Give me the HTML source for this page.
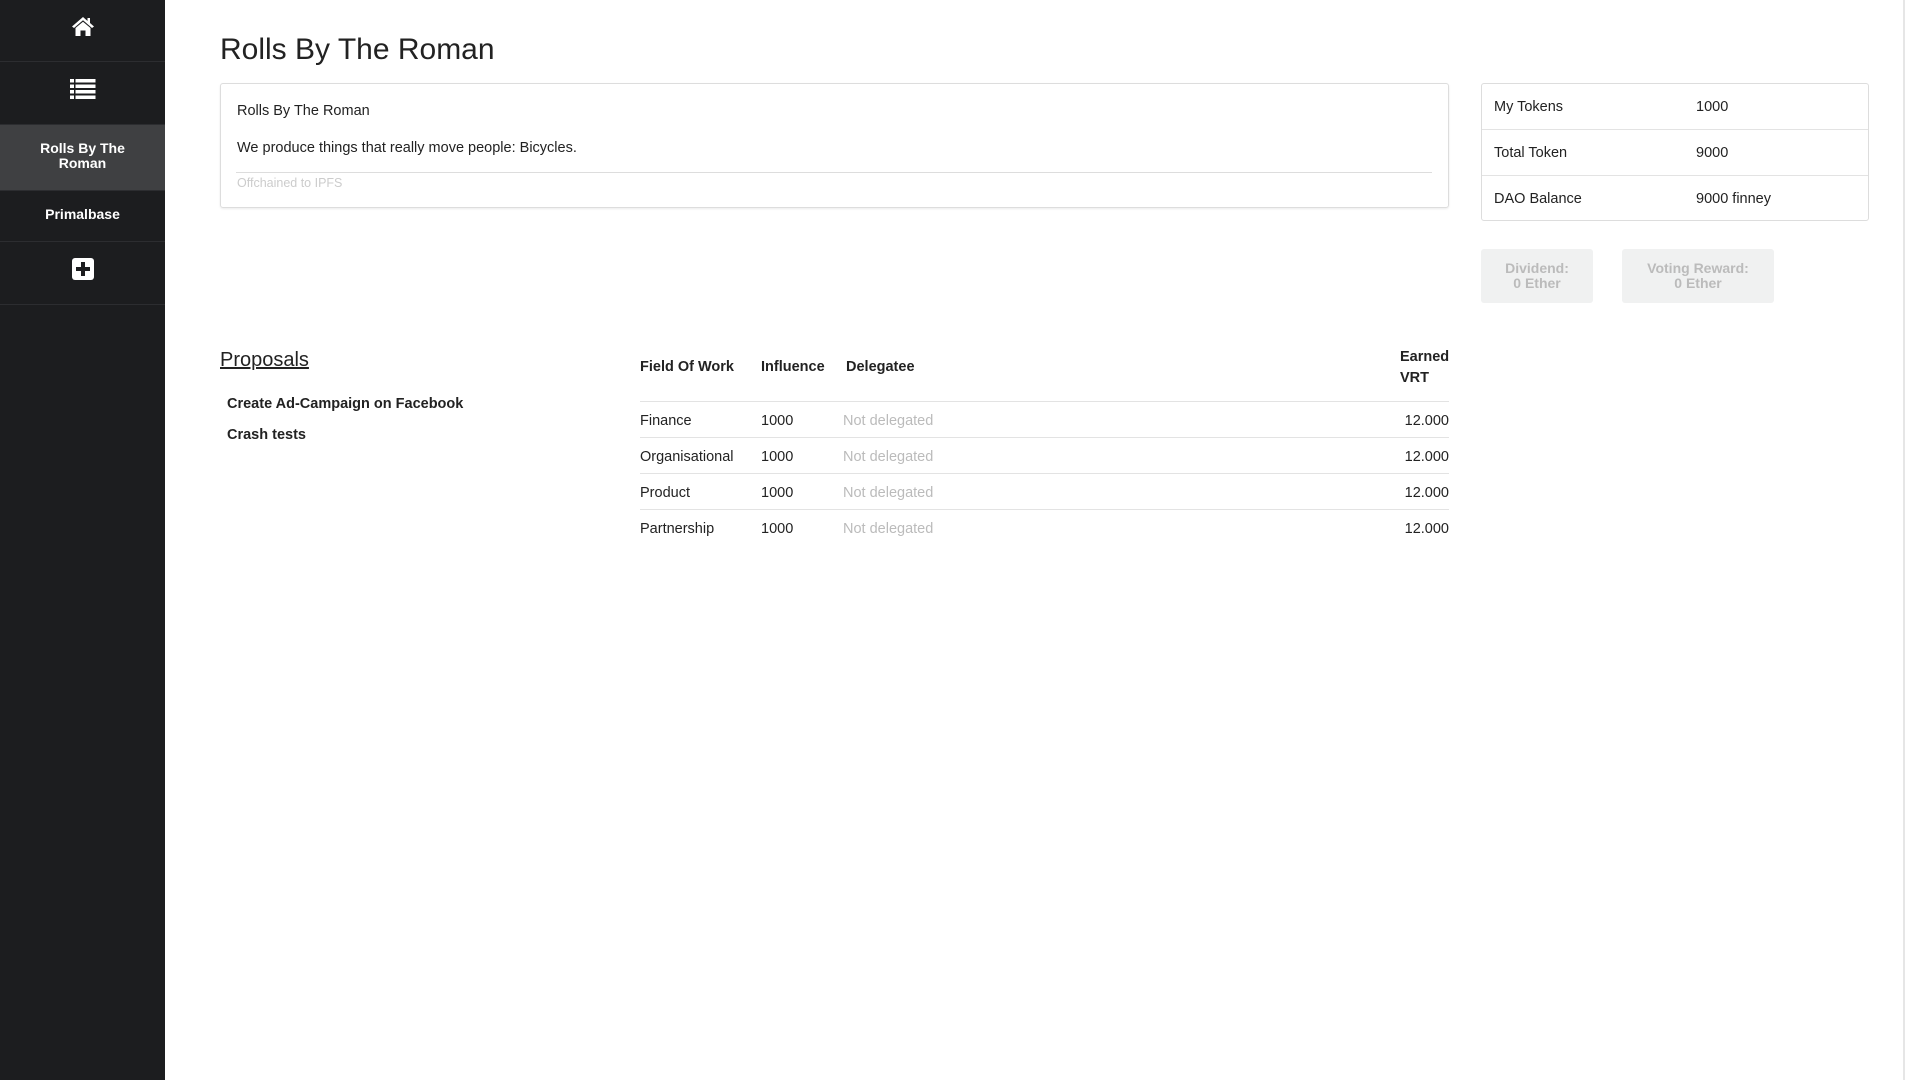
<!DOCTYPE html>
<html><head><meta charset="utf-8"><style>
*{margin:0;padding:0;box-sizing:border-box}
body{width:1906px;height:1080px;background:#fff;font-family:"Liberation Sans",sans-serif;color:#222;position:relative;overflow:hidden}
.sb{position:absolute;left:0;top:0;width:165px;height:1080px;background:#1c1d1f}
.it{position:absolute;left:0;width:165px;border-bottom:1px solid #2c2d30;display:flex;align-items:center;justify-content:center;color:#fff;font-weight:bold;font-size:14px;text-align:center;line-height:15px}
.a{position:absolute}
.card{position:absolute;left:220px;top:83px;width:1229px;height:125px;border:1px solid #ddd;border-radius:3px;box-shadow:0 1px 2px rgba(0,0,0,.08)}
.kv{position:absolute;left:1481px;top:83px;width:388px;height:138px;border:1px solid #ddd;border-radius:3px}
.kv div{height:46px;border-bottom:1px solid #e3e3e3;position:relative;font-size:14.5px;line-height:46px}
.kv div:last-child{border-bottom:none}
.kv span{position:absolute;left:12px}.kv b{position:absolute;left:214px;font-weight:normal}
.btn{position:absolute;top:249px;height:54px;background:#f0f1f1;border-radius:3px;color:#bbb;font-weight:bold;font-size:14px;line-height:15px;text-align:center;padding-top:12px}
.row{position:absolute;left:640px;width:809px;height:36px;border-top:1px solid #e3e3e3;font-size:14.5px;line-height:38px}
.row span{position:absolute}
</style></head><body>
<div class="sb">
<div class="it" style="top:0;height:62px;padding-bottom:10px"><svg width="24" height="22" viewBox="0 0 24 22"><path d="M12 2 L1 11.5 L3 13 L12 5.3 L21 13 L23 11.5 L19 8 V3 H16.5 V6 Z" fill="#fff"/><path d="M4.5 13 L12 6.8 L19.5 13 V21 H14.5 V15.5 H9.5 V21 H4.5Z" fill="#fff"/></svg></div>
<div class="it" style="top:62px;height:63px;padding-bottom:8px"><svg width="26" height="22" viewBox="0 0 26 22"><g fill="#fff"><rect x="0" y="1" width="4" height="3.5"/><rect x="5.5" y="1" width="20" height="3.5"/><rect x="0" y="6.5" width="4" height="3.5"/><rect x="5.5" y="6.5" width="20" height="3.5"/><rect x="0" y="12" width="4" height="3.5"/><rect x="5.5" y="12" width="20" height="3.5"/><rect x="0" y="17.5" width="4" height="3.5"/><rect x="5.5" y="17.5" width="20" height="3.5"/></g></svg></div>
<div class="it" style="top:125px;height:66px;background:#3f4042;padding-bottom:4px">Rolls By The<br>Roman</div>
<div class="it" style="top:191px;height:51px;padding-bottom:4px">Primalbase</div>
<div class="it" style="top:242px;height:63px;padding-bottom:8px"><svg width="22" height="24" viewBox="0 0 22 24"><rect x="0" y="1" width="22" height="22" rx="3" fill="#fff"/><path d="M9 5h4v5h5v4h-5v5h-4v-5h-5v-4h5z" fill="#1c1d1f"/></svg></div>
</div>
<div style="position:absolute;left:1903px;top:0;width:2px;height:1080px;background:#e6e6e6"></div>
<div class="a" style="left:220px;top:31px;font-size:30px;line-height:38px">Rolls By The Roman</div>
<div class="card">
<div class="a" style="left:16px;top:19px;font-size:14.5px">Rolls By The Roman</div>
<div class="a" style="left:16px;top:56px;font-size:14.5px">We produce things that really move people: Bicycles.</div>
<div class="a" style="left:15px;top:88px;width:1196px;border-top:1px solid #ddd"></div>
<div class="a" style="left:16px;top:92px;font-size:12.5px;color:#ccc">Offchained to IPFS</div>
</div>
<div class="kv"><div><span>My Tokens</span><b>1000</b></div><div><span>Total Token</span><b>9000</b></div><div><span>DAO Balance</span><b>9000 finney</b></div></div>
<div class="btn" style="left:1481px;width:112px">Dividend:<br>0 Ether</div>
<div class="btn" style="left:1622px;width:152px">Voting Reward:<br>0 Ether</div>
<div class="a" style="left:220px;top:349px;font-size:20px;text-decoration:underline">Proposals</div>
<div class="a" style="left:227px;top:396px;font-size:14.5px;font-weight:bold">Create Ad-Campaign on Facebook</div>
<div class="a" style="left:227px;top:427px;font-size:14.5px;font-weight:bold">Crash tests</div>
<div class="a" style="left:640px;top:359px;font-size:14.5px;font-weight:bold">Field Of Work</div>
<div class="a" style="left:761px;top:359px;font-size:14.5px;font-weight:bold">Influence</div>
<div class="a" style="left:846px;top:359px;font-size:14.5px;font-weight:bold">Delegatee</div>
<div class="a" style="left:1400px;top:347px;font-size:14.5px;font-weight:bold;line-height:21px">Earned<br>VRT</div>
<div class="row" style="top:401px"><span style="left:0">Finance</span><span style="left:121px">1000</span><span style="left:203px;color:#bbb">Not delegated</span><span style="right:0">12.000</span></div>
<div class="row" style="top:437px"><span style="left:0">Organisational</span><span style="left:121px">1000</span><span style="left:203px;color:#bbb">Not delegated</span><span style="right:0">12.000</span></div>
<div class="row" style="top:473px"><span style="left:0">Product</span><span style="left:121px">1000</span><span style="left:203px;color:#bbb">Not delegated</span><span style="right:0">12.000</span></div>
<div class="row" style="top:509px"><span style="left:0">Partnership</span><span style="left:121px">1000</span><span style="left:203px;color:#bbb">Not delegated</span><span style="right:0">12.000</span></div>
</body></html>
